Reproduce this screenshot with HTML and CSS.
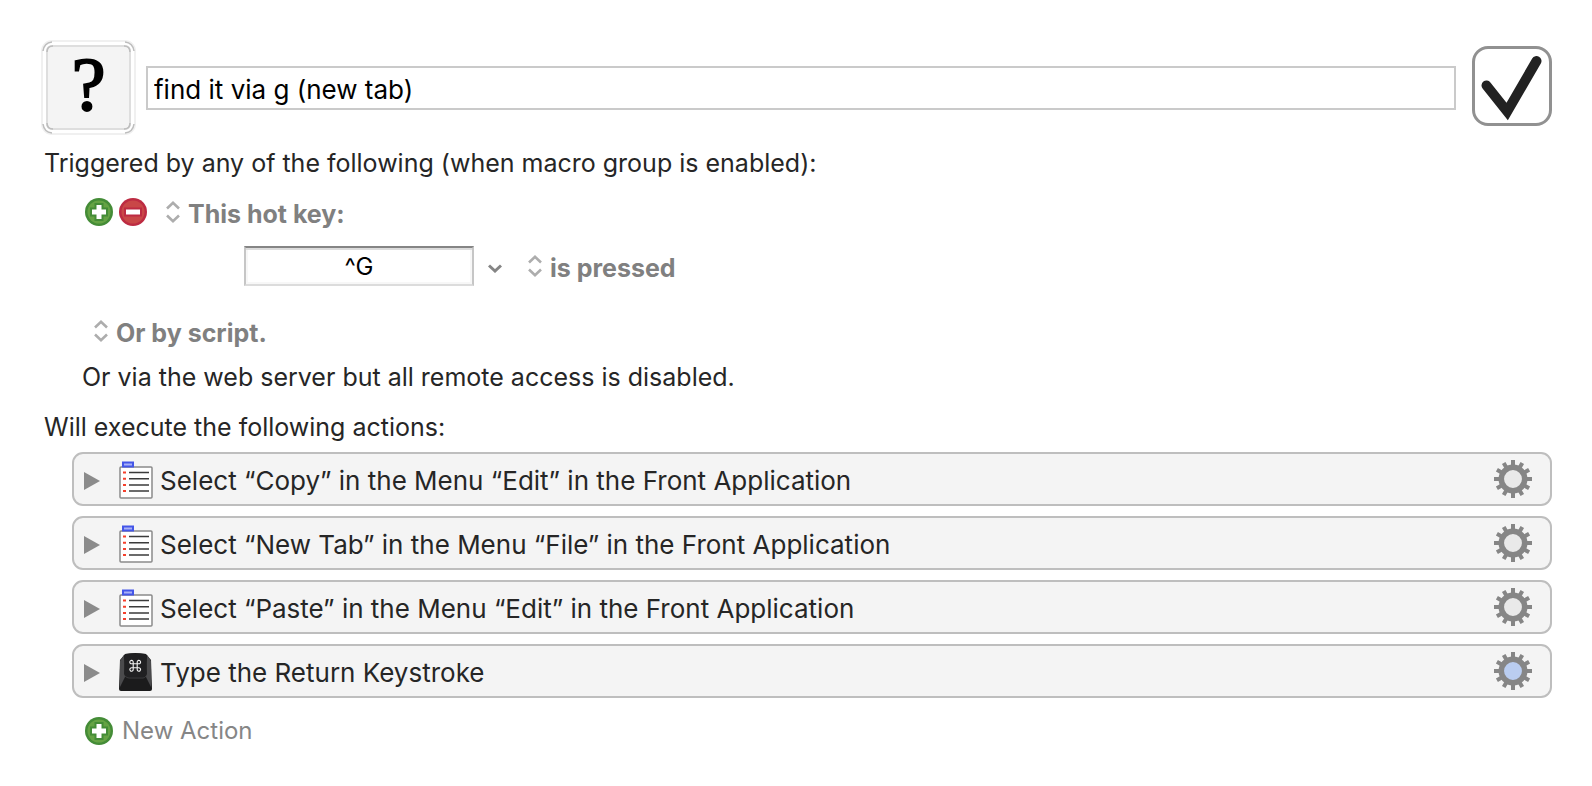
FILE: index.html
```html
<!DOCTYPE html>
<html lang="en">
<head>
<meta charset="utf-8">
<title>Macro Editor</title>
<link rel="stylesheet" href="styles.css">
</head>
<body>
<svg class="defs" aria-hidden="true">
  <defs>
    <symbol id="plus" viewBox="0 0 28 28">
      <circle cx="14" cy="14" r="14" fill="#448c37"/>
      <circle cx="14" cy="14" r="11.5" fill="#65a344"/>
      <path d="M9.500 5h9v4.500h4.500v9h-4.500v4.500h-9v-4.500h-4.500v-9h4.500z" fill="#448c37"/>
      <path d="M11.500 7h5v4.500h4.500v5h-4.500v4.500h-5v-4.500h-4.500v-5h4.500z" fill="#fff"/>
    </symbol>
    <symbol id="minus" viewBox="0 0 28 28">
      <circle cx="14" cy="14" r="14" fill="#bd2b42"/>
      <circle cx="14" cy="14" r="11.500" fill="#c94747"/>
      <path d="M5 9.500h18v9h-18z" fill="#bd2b42"/>
      <path d="M7 11.500h14v5h-14z" fill="#fff"/>
    </symbol>
    <symbol id="updown" viewBox="0 0 14 22">
      <path d="M1 7.500L7 1.800L13 7.500M1 14.500L7 20.200L13 14.500" fill="none" stroke="#adadad" stroke-width="2.600"/>
    </symbol>
    <symbol id="menu" viewBox="0 0 34 38">
      <rect x="1" y="6" width="32" height="31" rx="1" fill="#fff" stroke="#8b8b8b" stroke-width="1.500"/>
      <rect x="3" y="0.500" width="12" height="6" fill="#4456e8"/>
      <rect x="5" y="2.500" width="8" height="2" fill="#a9b1f5"/>
      <path d="M10 11.500h20M10 17.800h20M10 24h20M10 30h20" stroke="#3b3b3b" stroke-width="1.600"/>
      <path d="M4 11.500h3M4 17.800h3M4 24h3M4 30h3" stroke="#f5402c" stroke-width="2"/>
    </symbol>
    <symbol id="gear" viewBox="-19 -19 38 38">
      <g stroke="#868686" stroke-width="4">
        <path d="M0-19V19M-19 0H19M-9.300-16.100L9.300 16.100M9.300-16.100L-9.300 16.100M-16.100-9.300L16.100 9.300M-16.100 9.300L16.100-9.300"/>
      </g>
      <circle r="11.700" fill="currentColor" stroke="#868686" stroke-width="5.500"/>
    </symbol>
  </defs>
</svg>
<main class="editor">
  <header class="head">
    <button class="macro-icon" aria-label="Macro icon">
      <svg class="macro-icon-frame" viewBox="0 0 95 95" aria-hidden="true">
        <rect x="1" y="1" width="93" height="93" rx="10" fill="#fff" stroke="#f0f0f0" stroke-width="2"/>
        <rect x="6" y="6" width="83" height="83" rx="5" fill="#f4f4f4" stroke="#dedede" stroke-width="2"/>
        <path d="M2 11Q3 3 11 2M84 2Q92 3 93 11M93 84Q92 92 84 93M11 93Q3 92 2 84M6 12Q6 6 12 6M83 6Q89 6 89 12M89 83Q89 89 83 89M12 89Q6 89 6 83" fill="none" stroke="#bdbdbd" stroke-width="1.500"/>
      </svg>
      <span class="macro-icon-face">?</span>
    </button>
    <input class="name" type="text" aria-label="Macro name" value="find it via g (new tab)">
    <label class="enable">
      <input class="enable-box" type="checkbox" aria-label="Macro enabled" checked>
      <svg class="enable-mark" viewBox="0 0 80 80" aria-hidden="true">
        <path d="M14.500 39.500L35.200 65.500L64.500 15" fill="none" stroke="#222" stroke-width="10" stroke-linecap="round" stroke-linejoin="miter"/>
      </svg>
    </label>
  </header>

  <section>
    <h1 class="line">Triggered by any of the following (when macro group is enabled):</h1>
    <div class="trigger">
      <button class="round" aria-label="Add trigger"><svg><use href="#plus"/></svg></button>
      <button class="round" aria-label="Remove trigger"><svg><use href="#minus"/></svg></button>
      <span class="popup popup-kind"><svg aria-hidden="true"><use href="#updown"/></svg><select aria-label="Trigger kind"><option>This hot key:</option></select></span>
    </div>
    <div class="hotkey">
      <input class="key" type="text" aria-label="Hot key" value="^G">
      <button class="more" aria-label="Key options"><svg viewBox="0 0 14 9"><path d="M1 1.500L7 7L13 1.500" fill="none" stroke="#858585" stroke-width="3"/></svg></button>
      <span class="popup"><svg aria-hidden="true"><use href="#updown"/></svg><select aria-label="Key event"><option>is pressed</option></select></span>
    </div>
    <div class="script">
      <span class="popup"><svg aria-hidden="true"><use href="#updown"/></svg><select aria-label="Script trigger"><option>Or by script.</option></select></span>
    </div>
    <p class="line remote">Or via the web server but all remote access is disabled.</p>
  </section>

  <section>
    <h2 class="line">Will execute the following actions:</h2>
    <ul class="actions">
      <li class="action">
        <button class="disclose" aria-label="Expand"></button>
        <svg class="kind" aria-hidden="true"><use href="#menu"/></svg>
        <span class="title">Select “Copy” in the Menu “Edit” in the Front Application</span>
        <button class="gear" aria-label="Action options"><svg><use href="#gear"/></svg></button>
      </li>
      <li class="action">
        <button class="disclose" aria-label="Expand"></button>
        <svg class="kind" aria-hidden="true"><use href="#menu"/></svg>
        <span class="title">Select “New Tab” in the Menu “File” in the Front Application</span>
        <button class="gear" aria-label="Action options"><svg><use href="#gear"/></svg></button>
      </li>
      <li class="action">
        <button class="disclose" aria-label="Expand"></button>
        <svg class="kind" aria-hidden="true"><use href="#menu"/></svg>
        <span class="title">Select “Paste” in the Menu “Edit” in the Front Application</span>
        <button class="gear" aria-label="Action options"><svg><use href="#gear"/></svg></button>
      </li>
      <li class="action">
        <button class="disclose" aria-label="Expand"></button>
        <svg class="kind" viewBox="0 0 34 38" aria-hidden="true">
          <path d="M6 1Q16 -1 27 1L32 7L33 36Q33 38 31 38H2Q0 38 0 36L1 7Z" fill="#1b1b1c"/>
          <path d="M5 2L6 24L1 34V8Z" fill="#4a4a4c"/>
          <path d="M28 2L27 24L32 34V8Z" fill="#4a4a4c"/>
          <path d="M6 1Q16 0 27 1L28 21Q27 24 25 24H8Q6 24 5 21Z" fill="#202022"/>
          <path d="M6 23Q8 25 10 25H24Q26 25 27 23" fill="none" stroke="#3c3c3e"/>
          <path d="M14.200 10.800h4v4h-4zM14.200 10.800v-1.500a1.700 1.700 0 1 0-1.700 1.500zM18.200 10.800v-1.500a1.700 1.700 0 1 1 1.700 1.500zM14.200 14.800v1.500a1.700 1.700 0 1 1-1.700-1.500zM18.200 14.800v1.500a1.700 1.700 0 1 0 1.700-1.500z" fill="none" stroke="#f2f2f2" stroke-width="1.100"/>
        </svg>
        <span class="title">Type the Return Keystroke</span>
        <button class="gear gear-active" aria-label="Action options"><svg><use href="#gear"/></svg></button>
      </li>
    </ul>
    <button class="new-action"><svg aria-hidden="true"><use href="#plus"/></svg>New Action</button>
  </section>
</main>
</body>
</html>
```
FILE: styles.css
```css
* { box-sizing: border-box; }
body {
  margin: 0;
  background: #fff;
  color: #262626;
  font: 26px/32px Inter, "Liberation Sans", sans-serif;
}
button, input, select {
  margin: 0;
  padding: 0;
  border: 0;
  background: none;
  color: inherit;
  font: inherit;
  appearance: none;
}
svg { display: block; }
.defs { position: absolute; width: 0; height: 0; }
.editor { padding: 40px 40px 40px 41px; }

.head { display: flex; align-items: center; margin-bottom: 12px; }
.macro-icon { display: grid; flex: none; width: 95px; height: 95px; }
.macro-icon-frame, .macro-icon-face { grid-area: 1 / 1; }
.macro-icon-face {
  padding-top: 6px;
  color: #000;
  font: 76px/76px "Liberation Serif", serif;
  -webkit-text-stroke: 2px #000;
}
.name {
  flex: 1;
  min-width: 0;
  height: 44px;
  margin: 0 16px 0 10px;
  padding: 4px 6px 0;
  border: 2px solid #cacaca;
  color: #000;
}
.enable { position: relative; flex: none; width: 80px; height: 80px; margin-bottom: 4px; }
.enable-box {
  display: block;
  width: 100%;
  height: 100%;
  border: 3px solid #919191;
  border-radius: 16px;
}
.enable-mark { position: absolute; inset: 0; pointer-events: none; }
.enable-box:not(:checked) + .enable-mark { display: none; }

.line { margin: 0 3px; font-size: 25px; font-weight: 400; }
.trigger { display: flex; align-items: center; gap: 6px; margin: 17px 0 0 44px; }
.round, .round svg { width: 28px; height: 28px; }
.popup { display: flex; align-items: center; gap: 8px; color: #808080; font-size: 25px; font-weight: 700; }
.popup svg { width: 14px; height: 22px; }
.popup select { height: 32px; padding-top: 2px; }
.popup-kind { margin-left: 13px; }
.hotkey { display: flex; align-items: center; margin: 18px 0 0 203px; }
.key {
  width: 230px;
  height: 40px;
  border: 2px solid #c6c6c6;
  border-top-color: #858585;
  border-bottom-color: #dcdcdc;
  box-shadow: inset 0 2px #dcdcdc, inset 0 0 0 2px #f7f7f7;
  color: #000;
  font-size: 24px;
  text-align: center;
}
.more { margin: 4px 26px 0 14px; }
.more svg { width: 14px; height: 9px; }
.script { margin: 29px 0 0 53px; }
.remote { margin: 14px 0 18px 41px; }

.actions {
  display: grid;
  gap: 10px;
  margin: 9px 0 17px 31px;
  padding: 0;
  list-style: none;
}
.action {
  display: flex;
  align-items: center;
  height: 54px;
  padding: 0 18px 0 10px;
  border: 2px solid #bebebe;
  border-radius: 11px;
  background: #f4f4f4;
}
.disclose {
  width: 16px;
  height: 18px;
  margin: 4px 19px 0 0;
  background: #8b8b8b;
  clip-path: polygon(0 0, 100% 50%, 0 100%);
}
.kind { flex: none; width: 34px; height: 38px; margin: 2px 7px 0 0; }
.title { flex: 1; padding-top: 3px; }
.gear { color: #e9e9e9; }
.gear svg { width: 38px; height: 38px; }
.gear-active { color: #bacdf0; }
.new-action {
  display: flex;
  align-items: center;
  gap: 9px;
  margin-left: 44px;
  color: #868686;
  font-size: 24px;
}
.new-action svg { width: 28px; height: 28px; }
```
